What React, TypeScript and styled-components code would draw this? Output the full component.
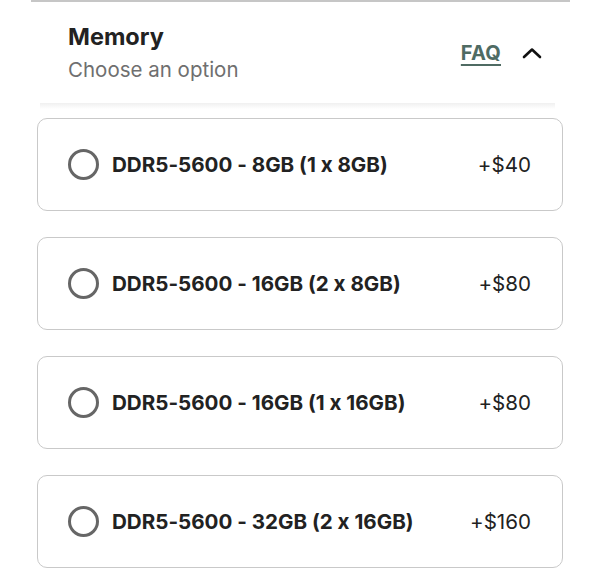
import React from "react"
import styled, { createGlobalStyle } from "styled-components"

const GlobalStyle = createGlobalStyle`
  html, body {
    margin: 0;
    padding: 0;
    background: #ffffff;
  }
  body {
    font-family: Inter, "Noto Sans", sans-serif;
    font-feature-settings: "calt" 0;
    color: #222222;
  }
`

const Page = styled.div`
  width: 600px;
  height: 582px;
  overflow: hidden;
`

const Section = styled.section`
  margin: 0 30px 0 31px;
  border-top: 2px solid #c6c6c6;
`

const Header = styled.div`
  display: flex;
  align-items: flex-start;
  justify-content: space-between;
  padding: 21px 28px 0 37px;
  height: 81px;
  box-sizing: border-box;
`

const TitleBlock = styled.div`
  display: flex;
  flex-direction: column;
  gap: 6px;
`

const Title = styled.h2`
  margin: 0;
  font-size: 23.5px;
  line-height: 28px;
  font-weight: 700;
  color: #222222;
`

const Subtitle = styled.span`
  font-size: 20.5px;
  line-height: 26px;
  color: #6f6f6f;
`

const Actions = styled.div`
  display: flex;
  align-items: center;
  gap: 21px;
  margin-top: 18px;
`

const FaqLink = styled.a`
  font-size: 20px;
  font-weight: 700;
  letter-spacing: 0.2px;
  color: #4f6b63;
  text-decoration: underline;
  text-underline-offset: 4px;
  text-decoration-thickness: 2px;
`

const ShadowLine = styled.div`
  height: 6px;
  margin: 20px 45px 0 40px;
  background: linear-gradient(#ececec, rgba(255, 255, 255, 0));
  opacity: 0.8;
`

const List = styled.div`
  display: flex;
  flex-direction: column;
  gap: 26px;
  padding: 9px 37px 0 37px;
`

const Card = styled.label`
  display: flex;
  align-items: center;
  height: 93px;
  box-sizing: border-box;
  padding: 0 31px 0 30px;
  border: 1.5px solid #c9c9c9;
  border-radius: 10px;
  cursor: pointer;
`

const Radio = styled.span`
  width: 31px;
  height: 31px;
  box-sizing: border-box;
  border: 3px solid #666666;
  border-radius: 50%;
  flex-shrink: 0;
`

const Label = styled.span`
  margin-left: 13px;
  flex: 1;
  font-size: 20.6px;
  font-weight: 700;
  color: #222222;
`

const Price = styled.span`
  font-size: 20.6px;
  color: #222222;
`

function ChevronUp() {
  return (
    <svg width="20" height="12" viewBox="0 0 20 12" fill="none">
      <path d="M2 10 L10 2.5 L18 10" stroke="#111" strokeWidth="2.6" strokeLinecap="round" strokeLinejoin="round" />
    </svg>
  )
}

const options = [
  { label: "DDR5-5600 - 8GB (1 x 8GB)", price: "+$40" },
  { label: "DDR5-5600 - 16GB (2 x 8GB)", price: "+$80" },
  { label: "DDR5-5600 - 16GB (1 x 16GB)", price: "+$80" },
  { label: "DDR5-5600 - 32GB (2 x 16GB)", price: "+$160" },
]

export default function App() {
  return (
    <Page>
      <GlobalStyle />
      <Section>
        <Header>
          <TitleBlock>
            <Title>Memory</Title>
            <Subtitle>Choose an option</Subtitle>
          </TitleBlock>
          <Actions>
            <FaqLink href="#">FAQ</FaqLink>
            <ChevronUp />
          </Actions>
        </Header>
      </Section>
      <ShadowLine />
      <List>
        {options.map((o) => (
          <Card key={o.label}>
            <Radio />
            <Label>{o.label}</Label>
            <Price>{o.price}</Price>
          </Card>
        ))}
      </List>
    </Page>
  )
}
